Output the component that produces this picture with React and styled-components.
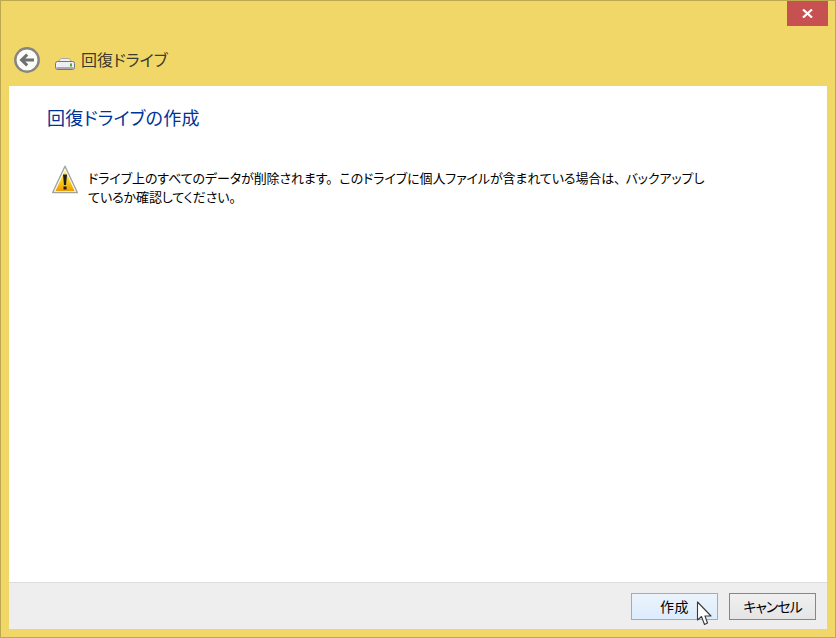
import React from 'react';
import styled, { createGlobalStyle } from 'styled-components';

const Global = createGlobalStyle`
  html, body { margin: 0; padding: 0; background: #f0d768; }
  body {
    font-family: "Noto Sans CJK JP", "Liberation Sans", sans-serif;
    font-feature-settings: "palt";
  }
  svg { display: block; }
`;

const Window = styled.div`
  box-sizing: border-box;
  width: 836px;
  height: 638px;
  display: flex;
  flex-direction: column;
  background: #f0d768;
  border: 1px solid #bfa94f;
`;
const TitleBar = styled.div`
  display: flex;
  justify-content: flex-end;
  height: 26px;
  padding-right: 7px;
`;
const CloseButton = styled.button`
  width: 41px;
  height: 25px;
  padding: 0;
  border: none;
  display: flex;
  align-items: center;
  justify-content: center;
  background: #c75050;
`;
const NavBar = styled.div`
  display: flex;
  align-items: center;
  height: 59px;
  padding: 4px 0 0 13px;
  box-sizing: border-box;
`;
const BackButton = styled.div`
  width: 26px;
  height: 26px;
  margin: 3px 15px 0 0;
`;
const DriveIcon = styled.div`
  width: 20px;
  height: 12px;
  margin: 11px 6px 0 0;
`;
const NavTitle = styled.span`
  font-size: 16px;
  line-height: 20px;
  color: #3c3a2c;
`;
const Panel = styled.div`
  flex: 1;
  display: flex;
  flex-direction: column;
  margin: 0 8px 8px;
  background: #ffffff;
`;
const Main = styled.div`
  flex: 1;
  padding: 19px 0 0 38px;
`;
const Heading = styled.h1`
  margin: 0 0 36px;
  font-size: 18px;
  line-height: 24px;
  font-weight: 400;
  letter-spacing: 0.2px;
  color: #003399;
`;
const Notice = styled.div`
  display: flex;
  align-items: flex-start;
  padding-left: 5px;
`;
const WarnIcon = styled.div`
  width: 26px;
  height: 29px;
  margin-right: 10px;
`;
const NoticeText = styled.p`
  margin: 3px 0 0;
  width: 618px;
  font-size: 13px;
  line-height: 19px;
  letter-spacing: -0.1px;
  color: #000;
`;
const Punct = styled.span`
  margin-right: ${p => p.$gap}px;
`;
const Footer = styled.div`
  display: flex;
  justify-content: flex-end;
  align-items: flex-start;
  gap: 11px;
  height: 47px;
  padding: 10px 11px 0 0;
  box-sizing: border-box;
  background: #eeeeee;
  border-top: 1px solid #dcdcdc;
`;
const Button = styled.div`
  position: relative;
  box-sizing: border-box;
  width: 87px;
  height: 27px;
  display: flex;
  align-items: center;
  justify-content: center;
  padding-bottom: 1px;
  font-size: 14px;
  letter-spacing: ${p => (p.$hover ? '0.5px' : '-1px')};
  color: #000;
  border: 1px solid ${p => (p.$hover ? '#7eb4ea' : '#3399ff')};
  background: ${p => (p.$hover ? 'linear-gradient(#ecf4fc, #dcecfc)' : 'linear-gradient(#f0f0f0, #e5e5e5)')};
`;
const Cursor = styled.svg`
  position: absolute;
  left: 64px;
  top: 7px;
`;

export default function App() {
  return (
    <Window>
      <Global />
      <TitleBar>
        <CloseButton aria-label="閉じる">
          <svg width="11" height="9" viewBox="0 0 11 9">
            <path d="M1 0.5 L10 8.5 M10 0.5 L1 8.5" stroke="#fff" strokeWidth="2.2" fill="none" />
          </svg>
        </CloseButton>
      </TitleBar>
      <NavBar>
        <BackButton>
          <svg width="26" height="26" viewBox="0 0 26 26">
            <circle cx="13" cy="13" r="11.7" fill="#fbfbf8" stroke="#858581" strokeWidth="2.4" />
            <path d="M20 13 H8 M13.2 7.6 L7.6 13 L13.2 18.4" stroke="#6f6f6f" strokeWidth="3" fill="none" />
          </svg>
        </BackButton>
        <DriveIcon>
          <svg width="20" height="12" viewBox="0 0 20 12">
            <path d="M3 5 L5 1.2 Q5.4 0.5 6.5 0.5 H13.5 Q14.6 0.5 15 1.2 L17 5 Z" fill="#f0efe8" stroke="#a9a99f" />
            <rect x="0.5" y="3.5" width="19" height="8" rx="2" fill="#eeeef4" stroke="#75777c" />
            <rect x="1.5" y="9" width="17" height="2" fill="#a9abb0" />
            <rect x="15" y="5.5" width="2" height="3" fill="#4fae2a" />
          </svg>
        </DriveIcon>
        <NavTitle>回復ドライブ</NavTitle>
      </NavBar>
      <Panel>
        <Main>
          <Heading>回復ドライブの作成</Heading>
          <Notice>
            <WarnIcon>
              <svg width="26" height="29" viewBox="0 0 26 29">
                <defs>
                  <linearGradient id="warn" x1="0" y1="0" x2="0" y2="1">
                    <stop offset="0" stopColor="#fff08a" />
                    <stop offset="0.5" stopColor="#fbd21e" />
                    <stop offset="1" stopColor="#eb9a00" />
                  </linearGradient>
                </defs>
                <path d="M13 1.2 L25.3 27.5 H0.7 Z" fill="#fff" stroke="#a3a39c" strokeWidth="1.4" strokeLinejoin="round" />
                <path d="M13 5 L22.6 26 H3.4 Z" fill="url(#warn)" />
                <path d="M11 9.5 H15 L14 20 H12 Z" fill="#1c1c1c" />
                <rect x="11.5" y="21.5" width="3" height="3" fill="#1c1c1c" />
              </svg>
            </WarnIcon>
            <NoticeText>
              ドライブ上のすべてのデータが削除されます<Punct $gap={7}>。</Punct>このドライブに個人ファイルが含まれている場合は<Punct $gap={5}>、</Punct>バックアップしているか確認してください。
            </NoticeText>
          </Notice>
        </Main>
        <Footer>
          <Button $hover>
            作成
            <Cursor width="17" height="26" viewBox="0 0 17 26">
              <path d="M1.5 1 V19 L5.5 15.5 L8.5 23.5 L11.5 22 L9 15 H15 Z" fill="#fff" stroke="#3a3a3a" strokeWidth="1.1" strokeLinejoin="round" />
            </Cursor>
          </Button>
          <Button>キャンセル</Button>
        </Footer>
      </Panel>
    </Window>
  );
}
